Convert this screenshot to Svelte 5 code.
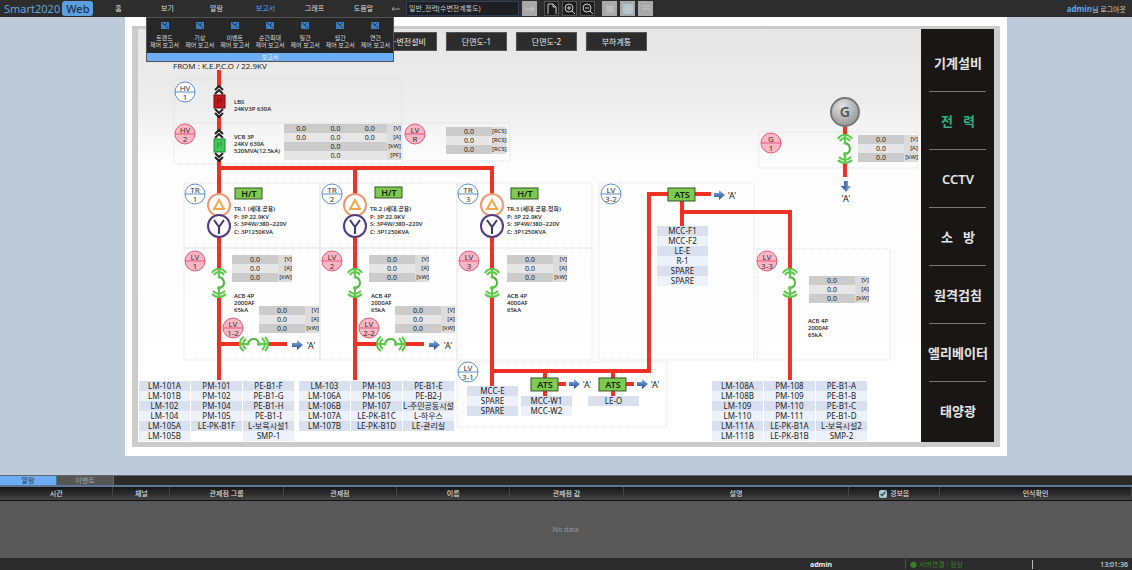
<script>
    const menus = ["홈", "보기", "알람", "보고서", "그래프", "도움말"];
    let activeMenu = $state("보고서");

    const reports = ["트렌드", "기상", "이벤트", "순간최대", "일간", "월간", "연간"];

    const systems = [
        "기계설비",
        "전\u00a0\u00a0\u00a0력",
        "CCTV",
        "소\u00a0\u00a0\u00a0방",
        "원격검침",
        "엘리베이터",
        "태양광",
    ];
    let activeSystem = $state(1);

    const views = ["수·변전설비", "단면도-1", "단면도-2", "부하계통"];

    const columns = [
        { name: "시간", width: 10 },
        { name: "채널", width: 5 },
        { name: "관제점 그룹", width: 10 },
        { name: "관제점", width: 10 },
        { name: "이름", width: 10 },
        { name: "관제점 값", width: 10 },
        { name: "설명", width: 20 },
        { name: "경보음", width: 8, check: true },
        { name: "인식확인", width: 17 },
    ];
    let sound = $state(true);
    let tab = $state(0);

    const frames = [
        [174, 80, 228, 43],
        [174, 123, 228, 41],
        [402, 123, 108, 38],
        [184, 183, 136, 65],
        [320, 183, 137, 65],
        [457, 183, 135, 65],
        [184, 248, 136, 112],
        [320, 248, 137, 112],
        [457, 248, 135, 112],
        [599, 183, 155, 177],
        [757, 249, 133, 111],
        [457, 362, 210, 65],
        [759, 132, 159, 36],
    ];

    const wires = [
        "M219 70V380",
        "M217 168H492",
        "M355 168V380",
        "M492 166V387",
        "M492 371H649V194H711",
        "M682 194V226",
        "M682 212H790V380",
        "M545 371V397",
        "M613 371V397",
        "M545 384H566",
        "M613 384H634",
        "M219 344H287",
        "M355 344H424",
        "M845 124V177",
    ];

    const tags = [
        { x: 185, y: 92, top: "HV", bottom: "1" },
        { x: 195, y: 194, top: "TR", bottom: "1" },
        { x: 332, y: 194, top: "TR", bottom: "2" },
        { x: 468, y: 194, top: "TR", bottom: "3" },
        { x: 611, y: 194, top: "LV", bottom: "3-2" },
        { x: 468, y: 372, top: "LV", bottom: "3-1" },
        { x: 185, y: 134, top: "HV", bottom: "2", pink: true },
        { x: 415, y: 134, top: "LV", bottom: "R", pink: true },
        { x: 195, y: 261, top: "LV", bottom: "1", pink: true },
        { x: 332, y: 261, top: "LV", bottom: "2", pink: true },
        { x: 469, y: 261, top: "LV", bottom: "3", pink: true },
        { x: 233, y: 328, top: "LV", bottom: "1-2", pink: true },
        { x: 369, y: 328, top: "LV", bottom: "2-2", pink: true },
        { x: 771, y: 143, top: "G", bottom: "1", pink: true },
        { x: 767, y: 261, top: "LV", bottom: "3-3", pink: true },
    ];

    const transformers = [
        { x: 219, ht: [235, 188], name: "TR.1 (세대,공용)" },
        { x: 355, ht: [375, 187], name: "TR.2 (세대,공용)" },
        { x: 492, ht: [511, 188], name: "TR.3 (세대,공용,정화)" },
    ];

    const breakers = [
        [219, 283, 0],
        [355, 283, 0],
        [492, 283, 0],
        [790, 283, 0],
        [845, 149, 0],
        [254, 344, -90],
        [391, 344, -90],
    ];

    const ats = [
        [668, 188],
        [531, 378],
        [599, 378],
    ];

    const arrows = [
        [297, 345, 0],
        [434, 345, 0],
        [719, 195, 0],
        [574, 384, 0],
        [642, 384, 0],
        [846, 186, 90],
    ];

    const links = [
        [311, 349],
        [448, 349],
        [732, 199],
        [587, 388],
        [655, 388],
        [846, 202],
    ];

    const notes = [
        { x: 234, y: 104, lines: ["LBS", "24KV3P 630A"] },
        { x: 234, y: 139, lines: ["VCB 3P", "24KV 630A", "520MVA(12.5kA)"] },
        { x: 234, y: 298, lines: ["ACB 4P", "2000AF", "65kA"] },
        { x: 371, y: 298, lines: ["ACB 4P", "2000AF", "65kA"] },
        { x: 507, y: 298, lines: ["ACB 4P", "4000AF", "65kA"] },
        { x: 808, y: 323, lines: ["ACB 4P", "2000AF", "65kA"] },
    ];

    const power = ["[V]", "[A]", "[kW]"];
    const meters = [
        { x: 232, y: 255, units: power },
        { x: 369, y: 255, units: power },
        { x: 507, y: 255, units: power },
        { x: 259, y: 306, units: power },
        { x: 395, y: 306, units: power },
        { x: 809, y: 276, units: power },
        { x: 858, y: 135, units: power },
        { x: 446, y: 127, units: ["[RCS]", "[RCS]", "[RCS]"] },
    ];

    const mainMeter = [
        ["0.0", "0.0", "0.0", "[V]"],
        ["0.0", "0.0", "0.0", "[A]"],
        ["", "0.0", "", "[kW]"],
        ["", "0.0", "", "[PF]"],
    ];

    const feeders = [
        {
            x: 138,
            y: 381,
            rows: [
                ["LM-101A", "PM-101", "PE-B1-F"],
                ["LM-101B", "PM-102", "PE-B1-G"],
                ["LM-102", "PM-104", "PE-B1-H"],
                ["LM-104", "PM-105", "PE-B1-I"],
                ["LM-105A", "LE-PK-B1F", "L-보육시설1"],
                ["LM-105B", "", "SMP-1"],
            ],
        },
        {
            x: 298,
            y: 381,
            rows: [
                ["LM-103", "PM-103", "PE-B1-E"],
                ["LM-106A", "PM-106", "PE-B2-J"],
                ["LM-106B", "PM-107", "L-주민공동시설"],
                ["LM-107A", "LE-PK-B1C", "L-하우스"],
                ["LM-107B", "LE-PK-B1D", "LE-관리실"],
            ],
        },
        {
            x: 711,
            y: 381,
            rows: [
                ["LM-108A", "PM-108", "PE-B1-A"],
                ["LM-108B", "PM-109", "PE-B1-B"],
                ["LM-109", "PM-110", "PE-B1-C"],
                ["LM-110", "PM-111", "PE-B1-D"],
                ["LM-111A", "LE-PK-B1A", "L-보육시설2"],
                ["LM-111B", "LE-PK-B1B", "SMP-2"],
            ],
        },
        { x: 466, y: 386, rows: [["MCC-E"], ["SPARE"], ["SPARE"]] },
        { x: 520, y: 396, rows: [["MCC-W1"], ["MCC-W2"]] },
        { x: 587, y: 396, rows: [["LE-O"]] },
        {
            x: 656,
            y: 226,
            rows: [["MCC-F1"], ["MCC-F2"], ["LE-E"], ["R-1"], ["SPARE"], ["SPARE"]],
        },
    ];
</script>

<div class="app">
    <header>
        <a class="logo" href="#home">Smart2020<b>Web</b></a>
        <nav>
            {#each menus as menu}
                <button class:active={menu === activeMenu} onclick={() => (activeMenu = menu)}>
                    {menu}
                </button>
            {/each}
        </nav>
        <div class="tools">
            <button class="back" aria-label="뒤로">
                <svg width="10" height="8" viewBox="0 0 10 8">
                    <path d="M9 4H1M3 2L1 4L3 6" fill="none" stroke="#999" />
                </svg>
            </button>
            <select aria-label="화면 선택">
                <option>일반_전력(수변전계통도)</option>
            </select>
            <button class="light" aria-label="이동">
                <svg width="10" height="6" viewBox="0 0 10 6">
                    <path d="M0 3H9M6 1L9 3L6 5" fill="none" stroke="#ccc" />
                </svg>
            </button>
            <button class="dark first" aria-label="새 화면">
                <svg width="12" height="12" viewBox="0 0 12 12">
                    <path d="M2 11V1H7L10 4V11M7 1V4H10" fill="none" stroke="#ccc" />
                </svg>
            </button>
            <button class="dark" aria-label="확대">
                <svg width="12" height="12" viewBox="0 0 12 12">
                    <path d="M8 8L11 11M3 5H7M5 3V7" stroke="#ccc" />
                    <circle cx="5" cy="5" r="4" fill="none" stroke="#ccc" />
                </svg>
            </button>
            <button class="dark" aria-label="축소">
                <svg width="12" height="12" viewBox="0 0 12 12">
                    <path d="M8 8L11 11M3 5H7" stroke="#ccc" />
                    <circle cx="5" cy="5" r="4" fill="none" stroke="#ccc" />
                </svg>
            </button>
            <button class="light first" aria-label="창">
                <svg width="10" height="10" viewBox="0 0 10 10">
                    <rect x="1" y="1" width="8" height="8" fill="#bbb" stroke="#a9a9a9" />
                </svg>
            </button>
            <button class="light" aria-label="격자">
                <svg width="10" height="10" viewBox="0 0 10 10">
                    <rect width="10" height="10" fill="#b4c4cf" />
                    <path d="M0 5H10M5 0V10" stroke="#c8cdd0" />
                </svg>
            </button>
            <button class="light" aria-label="목록">
                <svg width="10" height="10" viewBox="0 0 10 10">
                    <path d="M1 2H9M1 5H9" stroke="#c4c4c4" />
                </svg>
            </button>
        </div>
        <div class="user"><b>admin</b>님 <a href="#logout">로그아웃</a></div>

        {#if activeMenu === "보고서"}
            <div class="dropdown">
                <ul>
                    {#each reports as report}
                        <li>
                            <button>
                                <svg width="8" height="7" viewBox="0 0 8 7">
                                    <rect width="8" height="7" fill="#3c7cc0" />
                                    <path d="M1 1L4 3L7 6M4 3L6 1" fill="none" stroke="#1d3a5c" />
                                </svg>
                                <span>{report}</span>
                                <span>제어 보고서</span>
                            </button>
                        </li>
                    {/each}
                </ul>
                <div class="caption">보고서</div>
            </div>
        {/if}
    </header>

    <main>
        <div class="panel">
            <svg class="diagram" viewBox="138 29 784 413">
                <defs>
                    <linearGradient id="bar" x1="0" x2="1">
                        <stop offset="0" stop-color="#d3d3d3" />
                        <stop offset="1" stop-color="#e9e9e9" />
                    </linearGradient>
                    <linearGradient id="shade" x1="0" x2="0" y1="0" y2="1">
                        <stop offset="0" stop-color="#e6e6e6" />
                        <stop offset="0.18" stop-color="#ededed" />
                        <stop offset="0.32" stop-color="#fdfdfd" />
                        <stop offset="1" stop-color="#fff" />
                    </linearGradient>
                    <radialGradient id="metal" cx="0.4" cy="0.3" r="0.8">
                        <stop offset="0" stop-color="#e2e2e2" />
                        <stop offset="1" stop-color="#8e8e8e" />
                    </radialGradient>
                    <linearGradient id="arrow" x1="0" x2="0" y1="0" y2="1">
                        <stop offset="0" stop-color="#8fb2ec" />
                        <stop offset="1" stop-color="#1d468f" />
                    </linearGradient>
                </defs>
                <rect x="138" y="29" width="784" height="413" fill="url(#shade)" />

                {#each frames as [x, y, width, height]}
                    <rect class="frame" {x} {y} {width} {height} />
                {/each}

                {#each wires as d}
                    <path class="wire" {d} />
                {/each}

                <text class="source" x="173" y="69">FROM : K.E.P.C.O / 22.9KV</text>

                <!-- HV switches -->
                {#each [[101, "#c4161c", "#6d0c10"], [145, "#43c95a", "#1d8a34"]] as [y, fill, edge]}
                    <g transform="translate(219 {y})">
                        <rect x="-4" y="-14" width="8" height="28" fill="#fafafa" />
                        <path class="chevron" d="M-4 -10L0 -14L4 -10M-4 -6L0 -10L4 -6M-4 9L0 13L4 9M-4 13L0 17L4 13" transform="translate(0 -1)" />
                        <rect x="-5" y="-6" width="11" height="13" {fill} stroke={edge} />
                        <path d="M-1 -3V3M2 -3V1" stroke={edge} />
                    </g>
                {/each}

                {#each breakers as [x, y, angle]}
                    <g class="breaker" transform="translate({x} {y}) rotate({angle})">
                        <rect x="-3" y="-13" width="6" height="26" />
                        <path d="M-7 -10Q-5 -14 0 -14Q5 -14 7 -10M-5 -8Q-3 -11 0 -11Q3 -11 5 -8M0 -14V-6" />
                        <path d="M-7 11Q-4 14 0 14Q4 14 7 11M-6 8Q-3 11 0 11Q3 11 6 8M0 14V6" />
                        <path class="contact" d="M0 -6Q5 -5 5 0Q5 4 0 5" />
                        <circle cy="-6" r="1.5" />
                        <circle cy="5" r="2" />
                    </g>
                {/each}

                {#each transformers as { x, ht, name }}
                    <circle cx={x} cy="205" r="11" fill="#fff" stroke="#eb9a72" stroke-width="2" />
                    <path d="M{x - 5} 209H{x + 5}L{x} 200Z" fill="none" stroke="#f0a848" stroke-width="2" />
                    <circle cx={x} cy="226" r="11" fill="#fff" stroke="#543a85" stroke-width="2" />
                    <path d="M{x - 5} 220L{x} 227L{x + 5} 220M{x} 227V234" fill="none" stroke="#443468" stroke-width="2" />
                    <rect class="green" x={ht[0]} y={ht[1]} width="27" height="11" />
                    <text class="label" x={ht[0] + 14} y={ht[1] + 9}>H/T</text>
                    <text class="note" x={x + 15} y="211">{name}</text>
                    <text class="note" x={x + 15} y="219">P: 3P 22.9KV</text>
                    <text class="note" x={x + 15} y="226">S: 3P4W/380~220V</text>
                    <text class="note" x={x + 15} y="234">C: 3P1250KVA</text>
                {/each}

                {#each ats as [x, y]}
                    <rect class="green" {x} {y} width="27" height="13" />
                    <text class="label" x={x + 14} y={y + 10}>ATS</text>
                {/each}

                {#each arrows as [x, y, angle]}
                    <path
                        d="M-5 -2H0V-5L6 0L0 5V2H-5Z"
                        fill="url(#arrow)"
                        transform="translate({x} {y}) rotate({angle})"
                    />
                {/each}
                {#each links as [x, y]}
                    <text class="link" {x} {y}>'A'</text>
                {/each}

                {#each tags as { x, y, top, bottom, pink }}
                    <g class="tag" class:pink transform="translate({x} {y})">
                        <circle r="10" />
                        <path d="M-10 0H10" />
                        <text y="-1">{top}</text>
                        <text y="8">{bottom}</text>
                    </g>
                {/each}

                {#each notes as { x, y, lines }}
                    {#each lines as line, i}
                        <text class="note" {x} y={y + i * 7}>{line}</text>
                    {/each}
                {/each}

                <circle cx="845" cy="112" r="14" fill="url(#metal)" stroke="#777" stroke-width="2" />
                <text class="generator" x="845" y="117">G</text>

                <foreignObject x="376" y="31" width="290" height="22">
                    <div class="views">
                        {#each views as view}
                            <button>{view}</button>
                        {/each}
                    </div>
                </foreignObject>

                <foreignObject x="284" y="124" width="117" height="40">
                    <table class="meter wide">
                        <tbody>
                            {#each mainMeter as row}
                                <tr>
                                    {#each row as value}
                                        <td>{value}</td>
                                    {/each}
                                </tr>
                            {/each}
                        </tbody>
                    </table>
                </foreignObject>

                {#each meters as { x, y, units }}
                    <foreignObject {x} {y} width="62" height="32">
                        <table class="meter">
                            <tbody>
                                {#each units as unit}
                                    <tr><td>0.0</td><td>{unit}</td></tr>
                                {/each}
                            </tbody>
                        </table>
                    </foreignObject>
                {/each}

                {#each feeders as { x, y, rows }}
                    <foreignObject {x} {y} width={rows[0].length * 52 + 1} height={rows.length * 10 + 1}>
                        <table class="feeder">
                            <tbody>
                                {#each rows as row}
                                    <tr>
                                        {#each row as name}
                                            <td class:empty={!name}>{name}</td>
                                        {/each}
                                    </tr>
                                {/each}
                            </tbody>
                        </table>
                    </foreignObject>
                {/each}
            </svg>

            <aside>
                {#each systems as system, i}
                    <button class:active={i === activeSystem} onclick={() => (activeSystem = i)}>
                        {system}
                    </button>
                {/each}
            </aside>
        </div>
    </main>

    <section class="alarms">
        <div class="tabs">
            {#each ["알람", "이벤트"] as name, i}
                <button class:active={i === tab} onclick={() => (tab = i)}>{name}</button>
            {/each}
        </div>
        <table class="log">
            <thead>
                <tr>
                    {#each columns as { name, width, check }}
                        <th style="width: {width}%">
                            {#if check}
                                <label><input type="checkbox" bind:checked={sound} />{name}</label>
                            {:else}
                                {name}
                            {/if}
                        </th>
                    {/each}
                </tr>
            </thead>
            <tbody>
                <tr><td colspan={columns.length}>No data</td></tr>
            </tbody>
        </table>
    </section>

    <footer>
        <b>admin</b>
        <span class="server">● 서버연결 : 정상</span>
        <time>13:01:36</time>
    </footer>
</div>

<style>
    :global(body) {
        background: #bdcad9;
    }

    .app {
        display: flex;
        flex-direction: column;
        min-height: 100vh;
        font-family: "Noto Sans", "Noto Sans CJK KR", sans-serif;
        font-size: 7px;
    }

    button {
        margin: 0;
        padding: 0;
        border: none;
        background: none;
        color: inherit;
        font: inherit;
        cursor: pointer;
    }

    a {
        color: inherit;
        text-decoration: none;
    }

    header {
        position: relative;
        display: flex;
        align-items: center;
        height: 17px;
        background: #2d2d2d;
        color: #ddd;
    }

    .logo {
        width: 90px;
        padding-left: 4px;
        color: #62a5dc;
        font-size: 11px;
        line-height: 14px;
        white-space: nowrap;
    }
    .logo b {
        margin-left: 2px;
        padding: 0 4px;
        border-radius: 3px;
        background: #5c9fdc;
        color: #1d3350;
        font-weight: 500;
    }

    nav {
        display: flex;
    }
    nav button {
        width: 49px;
        line-height: 16px;
    }
    nav .active {
        color: #5fa4ea;
    }

    .tools {
        display: flex;
        align-items: center;
        gap: 3px;
    }
    .tools button {
        display: flex;
        align-items: center;
        justify-content: center;
        width: 15px;
        height: 15px;
    }
    .tools .light {
        background: #a9a9a9;
    }
    .tools .dark {
        box-sizing: border-box;
        border: 1px solid #555;
        background: #1c1c1c;
    }
    .tools .first {
        margin-left: 4px;
    }

    select {
        width: 113px;
        height: 15px;
        padding: 0 2px;
        border: 1px solid #2c4159;
        background: #1d1f22;
        color: #ccc;
        font: inherit;
        appearance: none;
    }

    .user {
        margin-left: auto;
        padding-right: 6px;
        color: #ddd;
        white-space: nowrap;
    }
    .user b {
        color: #5fa4ea;
        font-size: 8px;
    }
    .user a {
        color: #d8c9a0;
    }

    .dropdown {
        position: absolute;
        top: 17px;
        left: 146px;
        z-index: 1;
        width: 248px;
        border: 1px solid #555;
        box-sizing: border-box;
        background: #272727;
    }
    .dropdown ul {
        display: flex;
        margin: 0;
        padding: 0;
        list-style: none;
    }
    .dropdown li {
        flex: 1;
    }
    .dropdown button {
        display: flex;
        flex-direction: column;
        align-items: center;
        width: 100%;
        height: 35px;
        padding-top: 4px;
        font-size: 6px;
        line-height: 7px;
        white-space: nowrap;
    }
    .dropdown svg {
        margin-bottom: 6px;
    }
    .caption {
        background: #6caef5;
        color: #e8f2ff;
        font-size: 6px;
        line-height: 8px;
        text-align: center;
    }

    main {
        flex: 1;
        padding-bottom: 19px;
    }

    .panel {
        display: flex;
        width: 78%;
        margin: 0 auto;
        box-sizing: border-box;
        padding: 3px 6px 5px;
        border: solid #fff;
        border-width: 9px 7px;
        background: #cbcbcb;
    }

    .diagram {
        flex: 1;
        display: block;
        min-width: 0;
    }

    .frame {
        fill: none;
        stroke: #dcdcdc;
        stroke-dasharray: 1 1;
    }
    .wire {
        fill: none;
        stroke: #ee3124;
        stroke-width: 4;
    }
    .chevron {
        fill: none;
        stroke: #222;
        stroke-width: 2;
    }
    .breaker {
        fill: none;
        stroke: #5cc94a;
        stroke-width: 2;
    }
    .breaker rect {
        fill: #fff;
        stroke: none;
    }
    .breaker circle {
        fill: #5cc94a;
        stroke: none;
    }
    .breaker .contact {
        stroke: #4fb83f;
    }
    .green {
        fill: #7ccb4e;
        stroke: #36542a;
    }

    .source {
        font-size: 8px;
        fill: #222;
    }
    .label {
        fill: #14220f;
        font-size: 9px;
        font-weight: 600;
        text-anchor: middle;
    }
    .note {
        fill: #111;
        font-size: 6px;
        font-weight: 500;
    }
    .link {
        fill: #222;
        font-size: 9px;
        text-anchor: middle;
    }
    .generator {
        fill: #555;
        font-size: 14px;
        font-weight: 600;
        text-anchor: middle;
    }

    .tag {
        fill: #fff;
        stroke: #5d8fd0;
        stroke-width: 1;
    }
    .tag.pink {
        fill: #fbb6c4;
        stroke: #dc5a78;
    }
    .tag text {
        fill: #333;
        stroke: none;
        font-size: 8px;
        text-anchor: middle;
    }

    .views {
        display: flex;
        gap: 9px;
        padding-top: 1px;
    }
    .views button {
        width: 61px;
        height: 19px;
        box-sizing: border-box;
        border: 1px solid #555;
        background: #2c2c2c;
        color: #e8e8e8;
        font-size: 8px;
        line-height: 16px;
    }

    .meter {
        width: 60px;
        border-collapse: collapse;
        table-layout: fixed;
        font-size: 7px;
        line-height: 9px;
    }
    .meter td {
        height: 9px;
        padding: 0;
        text-align: center;
        color: #222;
    }
    .meter tr {
        background: #e6e6e6;
    }
    .meter tr:nth-child(odd) {
        background: #cbcbcb;
    }
    .meter td:last-child {
        width: 14px;
        background: #dcdcdc;
        font-size: 6px;
        text-align: right;
    }
    .meter.wide {
        width: 117px;
    }

    .feeder {
        border-spacing: 1px 0;
        table-layout: fixed;
        width: 100%;
        font-size: 8px;
        line-height: 10px;
    }
    .feeder td {
        height: 10px;
        padding: 0;
        background: #edf1f9;
        color: #222;
        text-align: center;
        white-space: nowrap;
    }
    .feeder tr:nth-child(odd) td {
        background: #d8e0ef;
    }
    .feeder td.empty {
        background: none;
    }

    aside {
        display: flex;
        flex-direction: column;
        width: 73px;
        box-sizing: border-box;
        padding: 5px 8px 3px;
        background: #191716;
        color: #e6e6e6;
    }
    aside button {
        flex: 1;
        border-bottom: 1px solid #777;
        font-size: 13px;
        font-weight: 600;
        white-space: nowrap;
        display: flex;
        align-items: center;
        justify-content: center;
    }
    aside button:last-child {
        border-bottom: none;
    }
    aside .active {
        color: #35ad87;
    }

    .tabs {
        display: flex;
        height: 12px;
        border-top: 1px solid #666;
        border-bottom: 2px solid #5c7896;
        box-sizing: border-box;
        background: #2d2a28;
        color: #aaa;
    }
    .tabs button {
        width: 57px;
        border-right: 1px solid #4d75a0;
        background: #555;
        line-height: 9px;
    }
    .tabs .active {
        background: #6caef5;
        color: #17365c;
    }

    .log {
        width: 100%;
        border-collapse: collapse;
        table-layout: fixed;
        background: #585858;
        color: #999;
    }
    .log th {
        height: 13px;
        padding: 0;
        border-right: 1px solid #444;
        border-bottom: 1px solid #111;
        background: linear-gradient(#151515, #444);
        color: #ddd;
        font-weight: 500;
        line-height: 12px;
    }
    .log td {
        height: 57px;
        padding: 0;
        text-align: center;
    }
    .log label {
        display: flex;
        align-items: center;
        justify-content: center;
        gap: 3px;
    }
    .log input {
        width: 8px;
        height: 8px;
        margin: 0;
        accent-color: #a8d0d4;
    }

    footer {
        display: flex;
        align-items: center;
        justify-content: flex-end;
        height: 12px;
        padding-right: 4px;
        background: #2b2b2b;
        color: #eee;
    }
    footer b {
        width: 95px;
    }
    .server {
        width: 122px;
        padding-left: 4px;
        border-left: 1px solid #45566a;
        color: #3f7d2e;
    }
    time {
        width: 95px;
        border-left: 1px solid #bbb;
        text-align: right;
    }
</style>
